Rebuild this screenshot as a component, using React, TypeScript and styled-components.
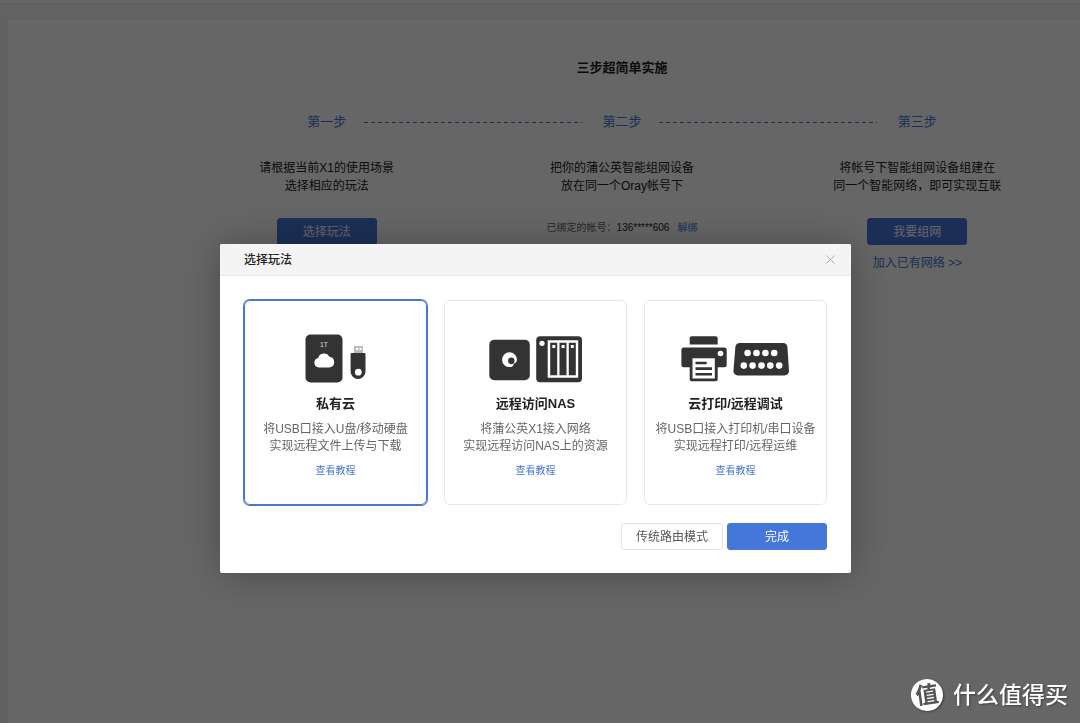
import React, { useState } from "react";
import styled, { createGlobalStyle, css } from "styled-components";

const GlobalStyle = createGlobalStyle`
  *, *::before, *::after { box-sizing: border-box; }
  html, body, #root { height: 100%; }
  body {
    margin: 0;
    background: #f5f5f5;
    color: #222;
    font: 12px/18px "Liberation Sans", "Noto Sans CJK SC", sans-serif;
  }
  h1, h2, h3, p, ol { margin: 0; padding: 0; }
  button { font: inherit; cursor: pointer; }
  svg { display: block; }
`;

const BLUE = "#4577d8";
const INK = "#333";

const Page = styled.div`
  display: flex;
  flex-direction: column;
  min-height: 100vh;
`;

const TopBar = styled.header`
  height: 3px;
  background: #fff;
  box-shadow: 0 1px 2px rgba(0, 0, 0, 0.06);
`;

const Panel = styled.main`
  flex: 1;
  margin: 17px 0 0 8px;
  padding: 38px 15px 0 171px;
  background: #fff;
  box-shadow: 0 0 2px rgba(0, 0, 0, 0.06);
`;

const PageTitle = styled.h1`
  font-size: 13px;
  line-height: 20px;
  font-weight: 700;
  text-align: center;
`;

const StepTrack = styled.div`
  display: flex;
  align-items: center;
  margin: 34px calc(100% / 6 - 20px) 0;
  line-height: 20px;
`;

const StepName = styled.span`
  width: 40px;
  color: ${BLUE};
  font-size: 13px;
  text-align: center;
  white-space: nowrap;
`;

const Dashes = styled.span`
  flex: 1;
  height: 1px;
  margin: 0 20px 0 17px;
  background: repeating-linear-gradient(90deg, ${BLUE} 0 4px, transparent 4px 7px);
`;

const Steps = styled.ol`
  display: grid;
  grid-template-columns: repeat(3, 1fr);
  margin-top: 27px;
  list-style: none;
`;

const Step = styled.li`
  display: flex;
  flex-direction: column;
  align-items: center;
  text-align: center;
`;

const StepAction = styled.div`
  display: flex;
  flex-direction: column;
  align-items: center;
  gap: 9px;
  margin-top: 23px;
`;

const Account = styled.p`
  font-size: 10px;
  line-height: 20px;
  color: #666;
`;

const Number = styled.span`
  color: #222;
`;

const TextLink = styled.a<{ $small?: boolean; $spaced?: boolean }>`
  color: ${BLUE};
  font-size: ${(p) => (p.$small ? 10 : 12)}px;
  margin-left: ${(p) => (p.$spaced ? 8 : 0)}px;
  text-decoration: none;
`;

const Button = styled.button<{ $plain?: boolean }>`
  min-width: 100px;
  height: 27px;
  padding: 0 14px;
  border: 1px solid ${BLUE};
  border-radius: 3px;
  background: ${BLUE};
  color: #fff;
  line-height: 18px;
  ${(p) =>
    p.$plain &&
    css`
      border-color: #e6e6e6;
      background: #fff;
      color: #555;
    `}
`;

const Shade = styled.div`
  position: fixed;
  inset: 0;
  display: flex;
  justify-content: center;
  align-items: flex-start;
  padding: 244px 9px 0 0;
  background: rgba(0, 0, 0, 0.6);
`;

const Dialog = styled.section`
  width: 100%;
  max-width: 631px;
  border-radius: 2px;
  overflow: hidden;
  background: #fff;
  box-shadow: 1px 1px 40px rgba(0, 0, 0, 0.3);
`;

const DialogHeader = styled.header`
  display: flex;
  align-items: center;
  justify-content: space-between;
  height: 32px;
  padding: 0 16px 0 24px;
  border-bottom: 1px solid #eaeaea;
  background: #f4f4f4;
`;

const DialogTitle = styled.h2`
  font-size: 12px;
  font-weight: 500;
  color: #222;
`;

const Close = styled.button`
  padding: 0;
  border: 0;
  background: none;
  color: #aaa;
`;

const DialogBody = styled.div`
  padding: 24px 24px 23px;
`;

const Cards = styled.div`
  display: grid;
  grid-template-columns: repeat(3, 1fr);
  gap: 17px;
`;

const Card = styled.div<{ $on: boolean }>`
  display: flex;
  flex-direction: column;
  align-items: center;
  padding: 33px 0 24px;
  border: 1px solid ${(p) => (p.$on ? BLUE : "#e8e8e8")};
  border-radius: 6px;
  box-shadow: ${(p) => (p.$on ? `0 0 0 1px ${BLUE}` : "none")};
  text-align: center;
`;

const Choice = styled.label`
  display: flex;
  flex-direction: column;
  align-items: center;
  cursor: pointer;
`;

const Radio = styled.input`
  position: absolute;
  opacity: 0;
  pointer-events: none;
`;

const CardTitle = styled.h3`
  margin-top: 11px;
  font-size: 13px;
  line-height: 20px;
  font-weight: 700;
  color: #222;
`;

const CardText = styled.p`
  margin: 7px 0;
  line-height: 17px;
  color: #666;
`;

const Footer = styled.footer`
  display: flex;
  justify-content: flex-end;
  gap: 4px;
  margin-top: 18px;
`;

const Watermark = styled.div`
  position: fixed;
  right: 12px;
  bottom: 12px;
  display: flex;
  align-items: center;
  gap: 10px;
  color: #fff;
  font-size: 23px;
  line-height: 32px;
  font-weight: 500;
  text-shadow: 1px 1px 2px rgba(0, 0, 0, 0.4);
`;

const Seal = styled.span`
  width: 32px;
  height: 32px;
  border-radius: 50%;
  background: #fff;
  color: #555;
  font-weight: 700;
  text-align: center;
  text-shadow: none;
  box-shadow: 1px 1px 2px rgba(0, 0, 0, 0.4);
  transform: rotate(-8deg);
`;

const DiskIcon = () => (
  <svg width="62" height="49" viewBox="0 0 62 49" aria-hidden="true">
    <rect x="0.5" y="0.5" width="37" height="48" rx="5" fill={INK} />
    <text x="19" y="12.5" fontSize="7" fill="#ddd" textAnchor="middle">1T</text>
    <path d="M14 33.500a4.800 4.800 0 0 1-.8-9.500 6 6 0 0 1 11.200-1.200 5.400 5.400 0 0 1 .2 10.700z" fill="#fff" />
    <path d="M49 12h9v7h-9z" fill="#bbb" />
    <path d="M51 14h2v2h-2zM54.500 14h2v2h-2z" fill="#fff" />
    <path d="M46.500 19h13a1 1 0 0 1 1 1v17.500a7.300 7.300 0 0 1-14.900 0V20a1 1 0 0 1 .9-1z" fill={INK} />
    <circle cx="53.300" cy="38.200" r="3.400" fill="#fff" />
  </svg>
);

const NasIcon = () => (
  <svg width="94" height="49" viewBox="0 0 94 49" aria-hidden="true">
    <rect x="0.300" y="5.700" width="40.500" height="40.500" rx="5" fill={INK} />
    <circle cx="20.500" cy="25.700" r="7.400" fill="#fff" />
    <circle cx="22.300" cy="26.800" r="3.200" fill={INK} />
    <path d="M28 27.500a7.500 7.500 0 0 1-5 5.700l1.800-3.200z" fill={INK} />
    <path d="M21.800 26.500l2.800 3-3.300 1z" fill={INK} />
    <rect x="47.200" y="2.300" width="45.800" height="46" rx="4" fill={INK} />
    <circle cx="53" cy="9.300" r="2.600" fill="#fff" />
    <path d="M58.700 6.300h30.500v37.500H58.700z" fill="#fff" />
    <path d="M61.200 8.800h7v32.500h-7zM70.500 8.800h7v32.500h-7zM79.800 8.800h7v32.500h-7z" fill={INK} />
    <path d="M63.300 11h3v3h-3zM72.600 11h3v3h-3zM81.800 11h3v3h-3z" fill="#fff" />
  </svg>
);

const topPins = [66.600, 75.500, 84.400, 93.200];
const bottomPins = [62.800, 71.600, 80.500, 89.300, 98.200];

const PrinterIcon = () => (
  <svg width="108" height="49" viewBox="0 0 108 49" aria-hidden="true">
    <path d="M8.700 10.500V4.300a2 2 0 0 1 2-2h24a2 2 0 0 1 2 2v6.200z" fill={INK} />
    <rect x="0.400" y="13.500" width="45.300" height="19.800" rx="2.500" fill={INK} />
    <rect x="8.700" y="23.700" width="28" height="23.600" rx="2" fill={INK} />
    <path d="M11.500 24.300h22.300v20.200H11.500z" fill="#fff" />
    <path d="M14.500 27.700h11.200v2.600H14.500zM14.500 33.300h16.500v2.600H14.500zM14.500 39h16.500v2.600H14.500z" fill={INK} />
    <circle cx="39.500" cy="19.500" r="2.800" fill="#fff" />
    <path d="M58.800 9h43.200a4.500 4.500 0 0 1 4.400 3.700l1.600 24a4.500 4.500 0 0 1-4.500 4.700H56.900a4.500 4.500 0 0 1-4.500-4.700l2-24A4.500 4.500 0 0 1 58.800 9z" fill={INK} />
    {topPins.map((x) => <circle key={x} cx={x} cy="19" r="3.300" fill="#fff" />)}
    {bottomPins.map((x) => <circle key={x} cx={x} cy="31.600" r="3.300" fill="#fff" />)}
  </svg>
);

const modes = [
  { id: "cloud", title: "私有云", lines: ["将USB口接入U盘/移动硬盘", "实现远程文件上传与下载"], Icon: DiskIcon },
  { id: "nas", title: "远程访问NAS", lines: ["将蒲公英X1接入网络", "实现远程访问NAS上的资源"], Icon: NasIcon },
  { id: "print", title: "云打印/远程调试", lines: ["将USB口接入打印机/串口设备", "实现远程打印/远程运维"], Icon: PrinterIcon },
];

export default function App() {
  const [mode, setMode] = useState("cloud");

  return (
    <>
      <GlobalStyle />
      <Page>
        <TopBar />
        <Panel>
          <PageTitle>三步超简单实施</PageTitle>
          <StepTrack>
            <StepName>第一步</StepName>
            <Dashes />
            <StepName>第二步</StepName>
            <Dashes />
            <StepName>第三步</StepName>
          </StepTrack>
          <Steps>
            <Step>
              <p>请根据当前X1的使用场景<br />选择相应的玩法</p>
              <StepAction>
                <Button type="button">选择玩法</Button>
              </StepAction>
            </Step>
            <Step>
              <p>把你的蒲公英智能组网设备<br />放在同一个Oray帐号下</p>
              <StepAction>
                <Account>
                  已绑定的帐号：<Number>136*****606</Number>
                  <TextLink href="#unbind" $small $spaced>解绑</TextLink>
                </Account>
              </StepAction>
            </Step>
            <Step>
              <p>将帐号下智能组网设备组建在<br />同一个智能网络，即可实现互联</p>
              <StepAction>
                <Button type="button">我要组网</Button>
                <TextLink href="#join">加入已有网络 &gt;&gt;</TextLink>
              </StepAction>
            </Step>
          </Steps>
        </Panel>
      </Page>

      <Shade>
        <Dialog role="dialog" aria-modal="true" aria-labelledby="dialog-title">
          <DialogHeader>
            <DialogTitle id="dialog-title">选择玩法</DialogTitle>
            <Close type="button" aria-label="关闭">
              <svg width="9" height="9" viewBox="0 0 9 9" aria-hidden="true">
                <path d="M.5.5l8 8M8.500.5l-8 8" stroke="currentColor" fill="none" />
              </svg>
            </Close>
          </DialogHeader>
          <DialogBody>
            <Cards>
              {modes.map(({ id, title, lines, Icon }) => (
                <Card key={id} $on={mode === id}>
                  <Choice>
                    <Radio type="radio" name="mode" checked={mode === id} onChange={() => setMode(id)} />
                    <Icon />
                    <CardTitle>{title}</CardTitle>
                    <CardText>{lines[0]}<br />{lines[1]}</CardText>
                  </Choice>
                  <TextLink href={`#${id}`} $small>查看教程</TextLink>
                </Card>
              ))}
            </Cards>
            <Footer>
              <Button type="button" $plain>传统路由模式</Button>
              <Button type="button">完成</Button>
            </Footer>
          </DialogBody>
        </Dialog>
      </Shade>

      <Watermark>
        <Seal>值</Seal>
        <span>什么值得买</span>
      </Watermark>
    </>
  );
}
